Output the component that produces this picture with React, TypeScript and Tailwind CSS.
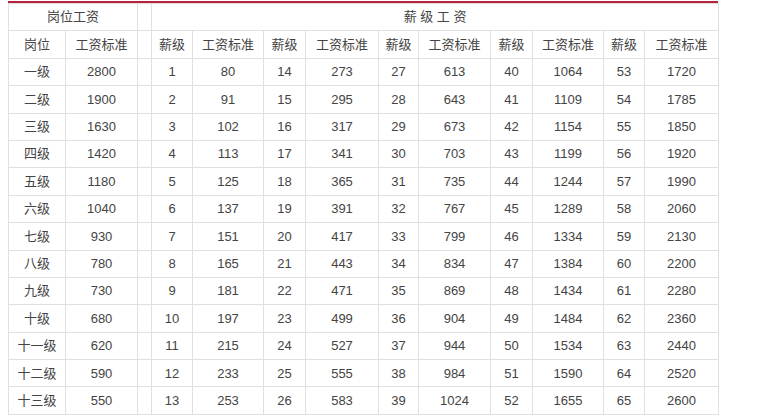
import React from "react";

const posts = [
  ["一级", "2800"],
  ["二级", "1900"],
  ["三级", "1630"],
  ["四级", "1420"],
  ["五级", "1180"],
  ["六级", "1040"],
  ["七级", "930"],
  ["八级", "780"],
  ["九级", "730"],
  ["十级", "680"],
  ["十一级", "620"],
  ["十二级", "590"],
  ["十三级", "550"],
];

const pay = [
  [80, 273, 613, 1064, 1720],
  [91, 295, 643, 1109, 1785],
  [102, 317, 673, 1154, 1850],
  [113, 341, 703, 1199, 1920],
  [125, 365, 735, 1244, 1990],
  [137, 391, 767, 1289, 2060],
  [151, 417, 799, 1334, 2130],
  [165, 443, 834, 1384, 2200],
  [181, 471, 869, 1434, 2280],
  [197, 499, 904, 1484, 2360],
  [215, 527, 944, 1534, 2440],
  [233, 555, 984, 1590, 2520],
  [253, 583, 1024, 1655, 2600],
];

const widths = [57, 72, 14, 41, 71, 42, 73, 40, 72, 42, 71, 41, 74];

const td = "border border-[#e0e0e0] text-center p-0 align-middle";

export default function App() {
  return (
    <div
      className="bg-white w-[771px] h-[417px] pl-[8px] pt-[1px] text-[#444] text-[13px]"
      style={{ fontFamily: '"Liberation Sans", Arial, "Noto Sans CJK SC", sans-serif' }}
    >
      <div className="w-[710px] h-[2px] bg-[#b7223f]" />
      <table className="table-fixed border-collapse w-[710px]">
        <colgroup>
          {widths.map((w, i) => (
            <col key={i} style={{ width: w }} />
          ))}
        </colgroup>
        <tbody>
          <tr className="h-[27.4px]">
            <td className={td} colSpan={2}>岗位工资</td>
            <td className={td}></td>
            <td className={td} colSpan={10}>薪 级 工 资</td>
          </tr>
          <tr className="h-[27.4px]">
            <td className={td}>岗位</td>
            <td className={td}>工资标准</td>
            <td className={td}></td>
            {[0, 1, 2, 3, 4].map((k) => (
              <React.Fragment key={k}>
                <td className={td}>薪级</td>
                <td className={td}>工资标准</td>
              </React.Fragment>
            ))}
          </tr>
          {posts.map((p, r) => (
            <tr key={r} className="h-[27.4px]">
              <td className={td}>{p[0]}</td>
              <td className={td}>{p[1]}</td>
              <td className={td}></td>
              {pay[r].map((v, k) => (
                <React.Fragment key={k}>
                  <td className={td}>{r + 1 + k * 13}</td>
                  <td className={td}>{v}</td>
                </React.Fragment>
              ))}
            </tr>
          ))}
        </tbody>
      </table>
    </div>
  );
}
